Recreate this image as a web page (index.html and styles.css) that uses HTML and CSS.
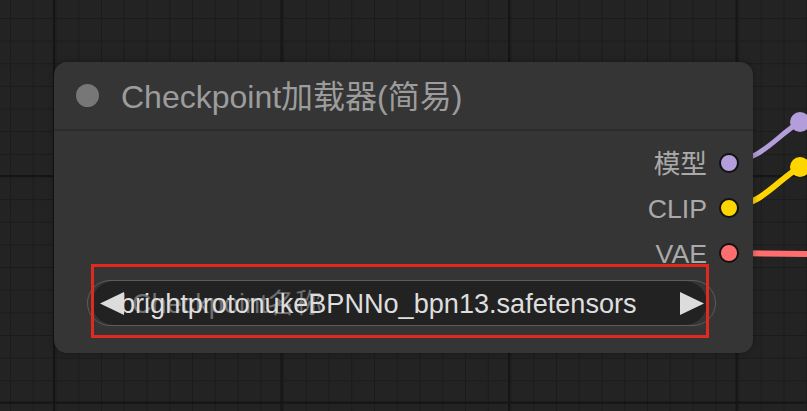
FILE: index.html
```html
<!DOCTYPE html>
<html lang="zh">
<head>
<meta charset="utf-8">
<title>Checkpoint加载器(简易)</title>
<link rel="stylesheet" href="styles.css">
</head>
<body>
<svg class="links" width="807" height="411" viewBox="0 0 807 411">
  <path d="M730 162 C762 160 776 136 800 122 L840 99" stroke="#b39ddb" stroke-width="5" fill="none"/>
  <circle cx="800" cy="122" r="10" fill="#b39ddb"/>
  <path d="M730 207 C762 205 776 181 800 167 L840 144" stroke="#ffd500" stroke-width="6" fill="none"/>
  <circle cx="800" cy="167" r="10" fill="#ffd500"/>
  <path d="M730 253 L807 254" stroke="#ff6e6e" stroke-width="6" fill="none"/>
</svg>
<div class="node">
  <div class="node-title">
    <span class="title-dot"></span>
    <span class="title-text">Checkpoint加载器(简易)</span>
  </div>
  <div class="node-body">
    <div class="outputs">
      <div class="slot"><span class="slot-label">模型</span><span class="slot-dot model"></span></div>
      <div class="slot"><span class="slot-label">CLIP</span><span class="slot-dot clip"></span></div>
      <div class="slot"><span class="slot-label">VAE</span><span class="slot-dot vae"></span></div>
    </div>
    <div class="combo">
      <div class="combo-fill">
        <svg class="arrow arrow-left" width="24" height="23" viewBox="0 0 24 23"><polygon points="0,11.5 24,0 24,23" fill="#dcdcdc"/></svg>
        <div class="combo-text">
          <span class="combo-label">Checkpoint名称</span>
          <span class="combo-value">brightprotonukeBPNNo_bpn13.safetensors</span>
        </div>
        <svg class="arrow arrow-right" width="24" height="23" viewBox="0 0 24 23"><polygon points="24,11.5 0,0 0,23" fill="#dcdcdc"/></svg>
      </div>
      <div class="annot"></div>
    </div>
  </div>
</div>
</body>
</html>
```
FILE: styles.css
```css
html {
  background: #232323;
}
body {
  margin: 0;
  width: 807px;
  height: 411px;
  overflow: hidden;
  position: relative;
  font-family: "Liberation Sans", "Noto Sans CJK SC", sans-serif;
  background-color: #232323;
  background-image:
    linear-gradient(90deg, #151515 2px, transparent 2px),
    linear-gradient(#151515 2px, transparent 2px),
    linear-gradient(90deg, #1b1b1b 1px, transparent 1px),
    linear-gradient(#1b1b1b 1px, transparent 1px);
  background-size: 227.5px 100%, 100% 226.5px, 22.75px 100%, 100% 22.65px;
  background-position: 53px 0, 0 175px, 10px 0, 0 18px;
}
.links {
  position: absolute;
  left: 0;
  top: 0;
}
.node {
  position: absolute;
  left: 54px;
  top: 62px;
  width: 699px;
  background: #353535;
  border-radius: 13px;
  box-shadow: 0 0 6px rgba(0, 0, 0, 0.35);
}
.node-title {
  height: 67px;
  display: flex;
  align-items: center;
  padding-left: 22px;
  gap: 22px;
  border-bottom: 2px solid #2c2c2c;
}
.title-dot {
  width: 23px;
  height: 23px;
  border-radius: 50%;
  background: #777;
}
.title-text {
  font-size: 32px;
  line-height: 36px;
  color: #9c9c9c;
  white-space: nowrap;
  padding-top: 2px;
}
.node-body {
  padding: 9px 0 27px;
}
.outputs {
  display: flex;
  flex-direction: column;
  align-items: flex-end;
  padding-right: 14px;
}
.slot {
  height: 45px;
  display: flex;
  align-items: center;
  gap: 12px;
}
.slot-label {
  font-size: 26.7px;
  line-height: 30px;
  color: #aaa;
  padding-top: 2px;
}
.slot-dot {
  width: 20px;
  height: 20px;
  box-sizing: border-box;
  border-radius: 50%;
  border: 2px solid #111;
}
.model { background: #b39ddb; }
.clip { background: #ffd500; }
.vae { background: #ff6e6e; }
.combo {
  position: relative;
  margin: 5px 37px 0 33px;
  height: 46px;
  box-sizing: border-box;
  border: 1.5px solid #5c5c5c;
  border-radius: 23px;
  display: flex;
  padding: 0 8px 0 4px;
}
.combo-fill {
  flex: 1;
  display: flex;
  align-items: center;
  background: #222;
  border-radius: 22px;
  min-width: 0;
}
.arrow {
  flex: none;
  position: relative;
  z-index: 1;
}
.arrow-left {
  margin-left: 7.5px;
  margin-right: -3.5px;
}
.arrow-right {
  margin-right: 3.5px;
}
.combo-text {
  flex: 1;
  display: grid;
  align-items: center;
  min-width: 0;
  white-space: nowrap;
  font-size: 27.1px;
  line-height: 30px;
  padding-top: 1px;
}
.combo-label,
.combo-value {
  grid-area: 1 / 1;
}
.combo-label {
  margin-left: 12px;
  color: #6e6e6e;
}
.combo-value {
  color: #dedede;
}
.annot {
  position: absolute;
  left: 2.5px;
  top: -17.5px;
  width: 618px;
  height: 74px;
  box-sizing: border-box;
  border: 3px solid #e12a1f;
  z-index: 2;
}
```
